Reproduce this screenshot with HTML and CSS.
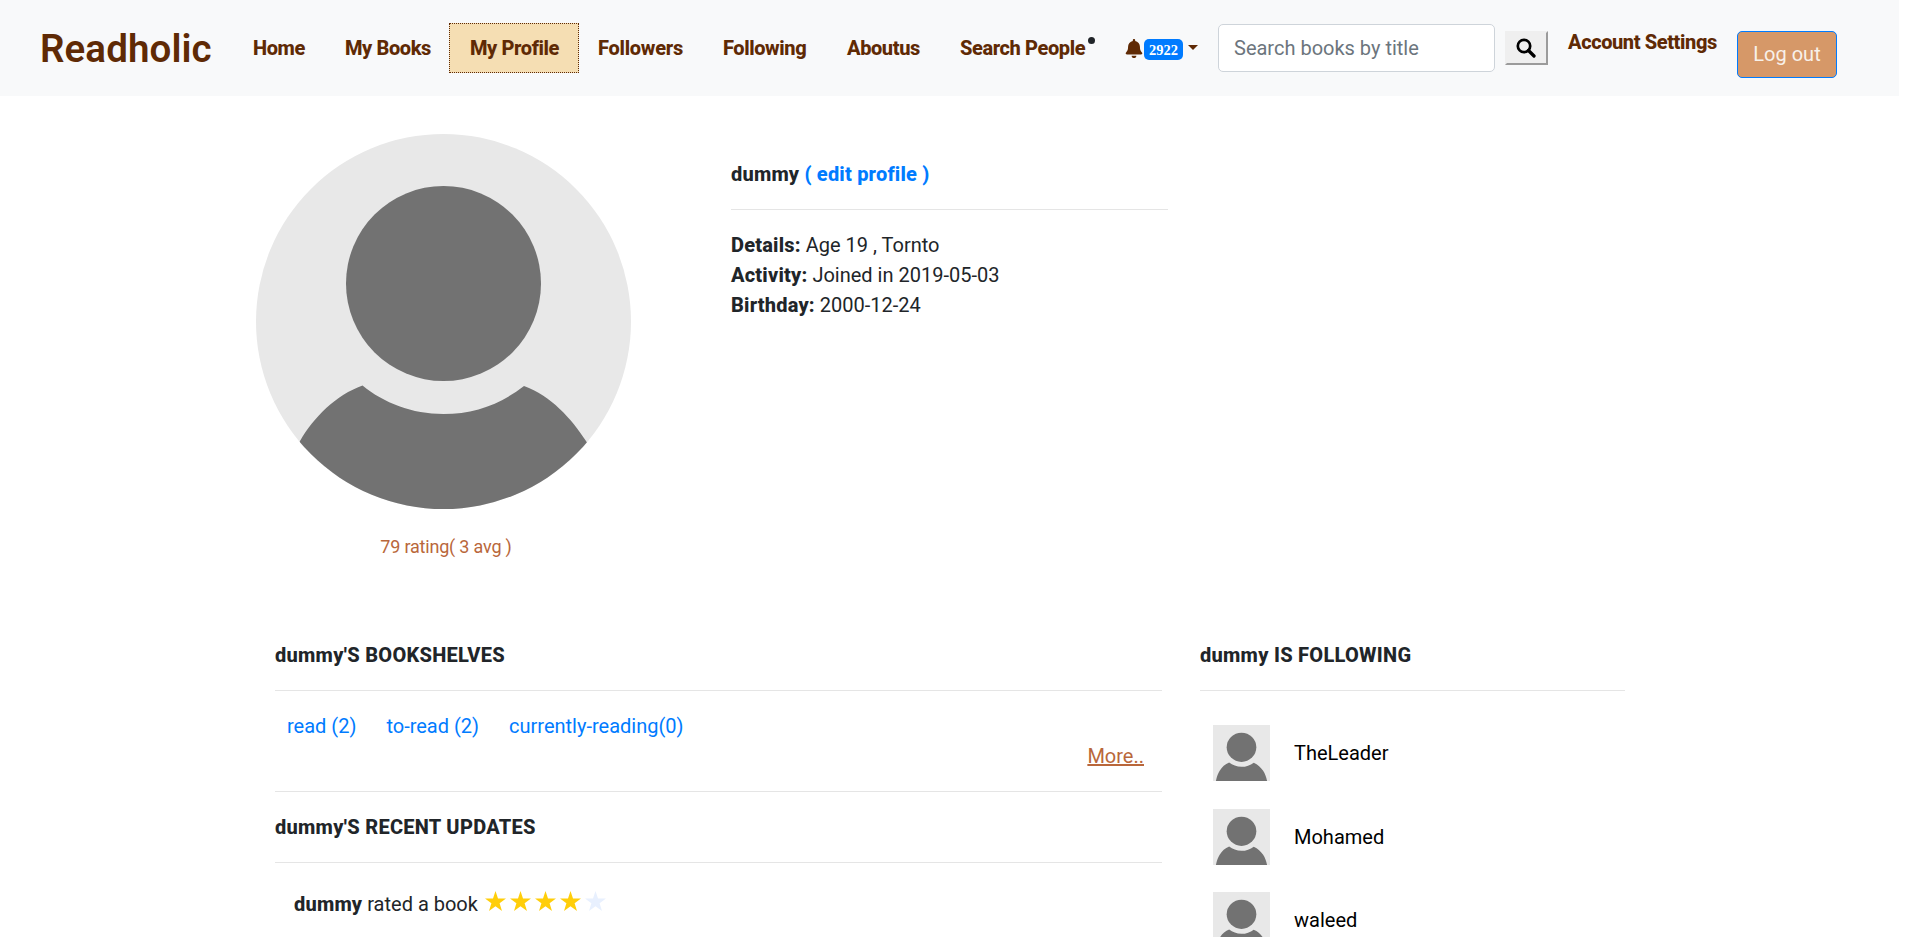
FILE: index.html
```html
<!DOCTYPE html>
<html lang="en">
<head>
<meta charset="utf-8">
<title>Readholic</title>
<link rel="stylesheet" href="styles.css">
</head>
<body>
<svg class="defs" width="0" height="0" aria-hidden="true">
  <symbol id="person" viewBox="0 0 375 375" preserveAspectRatio="none">
    <rect width="375" height="375" fill="#e8e8e8"/>
    <circle cx="187.5" cy="149.5" r="97.5" fill="#727272"/>
    <path d="M19 376C25 345 34 324 44 307C58 283 80 261 106.500 251.500C128 269 156 280 187.500 280C218 280 245 270 268 252C295 262 315 284 330 307C343 327 350 350 356 376Z" fill="#727272"/>
  </symbol>
  <symbol id="star" viewBox="0 0 21 20">
    <path d="M10.500 0L13 7.500H21L14.600 12.200L17 20L10.500 15.300L4 20L6.400 12.200L0 7.500H8Z"/>
  </symbol>
</svg>
<nav class="navbar">
  <a class="brand">Readholic</a>
  <a class="link home">Home</a>
  <a class="link books">My Books</a>
  <a class="link active">My Profile</a>
  <a class="link followers">Followers</a>
  <a class="link following">Following</a>
  <a class="link about">Aboutus</a>
  <a class="link people">Search People</a>
  <span class="dot"></span>
  <a class="alerts">
    <svg class="bell" viewBox="0 0 448 512"><path fill="#5f2a05" d="M224 512c35.320 0 63.970-28.650 63.970-64H160.030c0 35.350 28.650 64 63.970 64zm215.390-149.710c-19.320-20.760-55.470-51.990-55.470-154.290 0-77.700-54.480-139.900-127.940-155.160V32c0-17.670-14.320-32-31.980-32s-31.980 14.330-31.980 32v20.840C118.560 68.100 64.080 130.300 64.080 208c0 102.300-36.150 133.530-55.470 154.290-6 6.450-8.660 14.160-8.610 21.710.11 16.400 12.980 32 32.100 32h383.800c19.120 0 32-15.600 32.100-32 .05-7.550-2.610-15.270-8.610-21.710z"/></svg>
    <span class="badge">2922</span>
    <span class="caret"></span>
  </a>
  <input class="search" type="text" placeholder="Search books by title">
  <button class="go" aria-label="Search"><svg viewBox="0 0 20 20"><circle cx="8" cy="8" r="6.200" fill="none" stroke="#000" stroke-width="2.700"/><path d="M12.500 12.500L18 18" stroke="#000" stroke-width="3.300" stroke-linecap="round"/></svg></button>
  <a class="link settings">Account Settings</a>
  <button class="logout">Log out</button>
</nav>
<main class="page">
  <section class="profile">
    <div class="photo">
      <svg class="avatar"><use href="#person"/></svg>
      <p class="rating">79 rating( 3 avg )</p>
    </div>
    <div class="info">
      <b>dummy <a class="blue">( edit profile )</a></b>
      <hr>
      <div><b>Details:</b> Age 19 , Tornto</div>
      <div><b>Activity:</b> Joined in 2019-05-03</div>
      <div><b>Birthday:</b> 2000-12-24</div>
    </div>
  </section>
  <div class="columns">
    <section class="shelves">
      <h2>dummy'S BOOKSHELVES</h2>
      <hr>
      <div class="shelf-links"><a>read (2)</a><a>to-read (2)</a><a>currently-reading(0)</a></div>
      <div class="more"><a>More..</a></div>
      <hr>
      <h2>dummy'S RECENT UPDATES</h2>
      <hr>
      <div class="update">
        <span><b>dummy</b> rated a book</span>
        <span class="stars">
          <svg><use href="#star"/></svg><svg><use href="#star"/></svg><svg><use href="#star"/></svg><svg><use href="#star"/></svg><svg class="off"><use href="#star"/></svg>
        </span>
      </div>
    </section>
    <section class="follows">
      <h2>dummy IS FOLLOWING</h2>
      <hr>
      <ul>
        <li><svg><use href="#person"/></svg>TheLeader</li>
        <li><svg><use href="#person"/></svg>Mohamed</li>
        <li><svg><use href="#person"/></svg>waleed</li>
      </ul>
    </section>
  </div>
</main>
</body>
</html>
```
FILE: styles.css
```css
* { box-sizing: border-box; }
body {
  margin: 0;
  height: 937px;
  overflow: hidden;
  background: #fff;
  color: #212529;
  font: 20px/30px Roboto, sans-serif;
}
.defs { position: absolute; }
b, h2 { font-weight: 800; letter-spacing: 0.2px; }
h2 { margin: 0; font-size: 20px; line-height: 30px; letter-spacing: 0.28px; }
hr { margin: 20px 0; border: 0; border-top: 1px solid #e5e5e5; }
.navbar {
  display: flex;
  align-items: flex-start;
  width: 1899px;
  height: 96px;
  padding-left: 40px;
  background: #f8f9fa;
  color: #5f2a05;
  white-space: nowrap;
}
.brand { width: 193px; margin-top: 19px; font-size: 38.5px; line-height: 60px; font-weight: 600; letter-spacing: 0.1px; }
.link { margin-top: 23px; padding: 10px 0 10px 20px; line-height: 30px; height: 50px; font-weight: 800; letter-spacing: -0.4px; }
.home { width: 92px; }
.books { width: 124px; }
.active { width: 130px; border: 1px dotted #5f2a05; padding: 9px 0 9px 20px; background: #f5deb3; }
.followers { width: 124px; padding-left: 19px; letter-spacing: -0.25px; }
.following { width: 124px; }
.about { width: 113px; }
.people { width: 148px; }
.dot { width: 7px; height: 7px; margin-top: 37px; border-radius: 50%; background: #212529; }
.alerts { display: flex; width: 93px; margin: 39px 0 0 30px; }
.bell { width: 18px; height: 19px; margin-right: 1px; }
.badge {
  width: 39px;
  height: 21px;
  border-radius: 5px;
  background: #007bff;
  color: #fff;
  font: 700 14.5px/22px "Liberation Serif", serif;
  text-align: center;
}
.caret { margin: 6px 0 0 5px; border: 5px solid transparent; border-top-color: #5f2a05; border-bottom: 0; height: 5px; }
.search {
  width: 277px;
  height: 48px;
  margin-top: 24px;
  padding: 0 15px;
  border: 1px solid #ced4da;
  border-radius: 5px;
  background: #fff;
  font: 20px Roboto, sans-serif;
}
.search::placeholder { color: #6c757d; opacity: 1; }
.go { width: 43px; height: 34px; margin: 31px 0 0 10px; padding: 0 1px 0 0; border: 2px outset #efefef; background: #efefef; display: flex; align-items: center; justify-content: center; }
.go svg { width: 20px; height: 20px; }
.settings { width: 189px; margin-top: 17px; }
.logout {
  width: 100px;
  height: 47px;
  margin-top: 31px;
  padding: 0 0 2px;
  border: 1px solid #007bff;
  border-radius: 5px;
  background: #d69868;
  color: #f8f1ea;
  font: 20px Roboto, sans-serif;
}
.page { padding: 38px 0 0 256px; }
.profile { display: flex; gap: 100px; height: 506px; }
.photo { width: 375px; }
.avatar { display: block; width: 375px; height: 375px; border-radius: 50%; }
.rating { margin: 24px 0 0 5px; font-size: 18px; line-height: 27px; letter-spacing: -0.2px; text-align: center; color: #b9673b; }
.info { width: 437px; padding-top: 25px; }
.blue { color: #007bff; }
.columns { display: flex; gap: 38px; padding-left: 19px; }
.shelves { width: 887px; }
.shelf-links { display: flex; gap: 30px; padding-left: 12px; color: #007bff; }
.more { padding-right: 18px; text-align: right; text-decoration: underline; color: #b9673b; }
.update { display: flex; gap: 7px; padding: 6px 0 0 19px; }
.stars { display: flex; gap: 4.100px; padding-top: 2px; fill: #ffce0a; }
.stars svg { width: 21px; height: 20px; }
.stars .off { fill: #e8f0fe; }
.follows { width: 425px; }
.follows ul { display: flex; flex-direction: column; gap: 27.500px; margin: 0; padding: 14px 0 0 13px; list-style: none; color: #000; }
.follows li { display: flex; align-items: center; gap: 24px; height: 56px; }
.follows li svg { width: 57px; height: 56px; }
```
